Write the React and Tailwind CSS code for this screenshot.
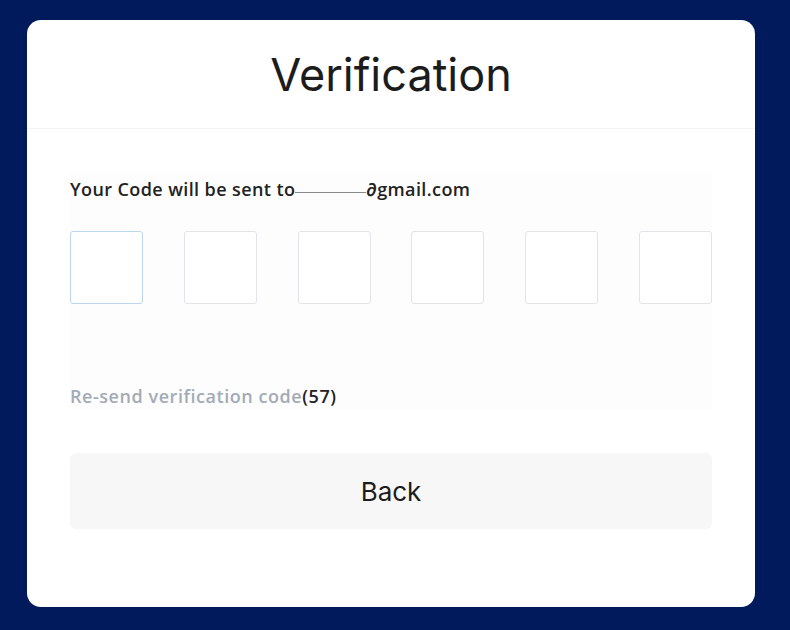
export default function App() {
  const boxes = [0, 1, 2, 3, 4, 5];
  return (
    <div className="w-[790px] h-[630px] bg-[#001a5b] pt-[20px] pl-[27px]" style={{ fontFamily: "'Open Sans', 'Noto Sans', sans-serif" }}>
      <div className="w-[728px] h-[587px] bg-white rounded-[14px] flex flex-col overflow-hidden">
        <div className="h-[109px] border-b border-[#f3f3f3] flex items-center justify-center pt-[1px]">
          <h1 className="text-[45px] text-[#1c1c1c]" style={{ fontFamily: "Inter, 'Liberation Sans', sans-serif" }}>Verification</h1>
        </div>
        <div className="px-[43px] pt-[43px] flex flex-col">
          <div className="bg-[#fdfdfd] flex flex-col pb-[2px]">
            <div className="flex items-center text-[18px] font-semibold tracking-[0.4px] text-[#222] h-[30px] pt-[5px]">
              <span>Your Code will be sent to</span>
              <span className="inline-block w-[71px] h-px bg-[#8a8a8a] mt-[5px]" />
              <span>∂gmail.com</span>
            </div>
            <div className="flex justify-between mt-[29px]">
              {boxes.map((b) => (
                <div key={b} className={`w-[73px] h-[73px] rounded-[3px] border ${b === 0 ? "border-[#bcd6ee]" : "border-[#e2e4e7]"} bg-white`} />
              ))}
            </div>
            <div className="mt-[81px] text-[18px] font-semibold tracking-[0.55px] text-[#a3abb6] h-[23px] flex items-center">
              Re-send verification code<span className="text-[#222]">(57)</span>
            </div>
          </div>
          <button className="mt-[43px] h-[76px] w-full rounded-[6px] bg-[#f7f7f7] text-[26px] text-[#1c1c1c] flex items-center justify-center" style={{ fontFamily: "Inter, 'Liberation Sans', sans-serif" }}>
            Back
          </button>
        </div>
      </div>
    </div>
  );
}
